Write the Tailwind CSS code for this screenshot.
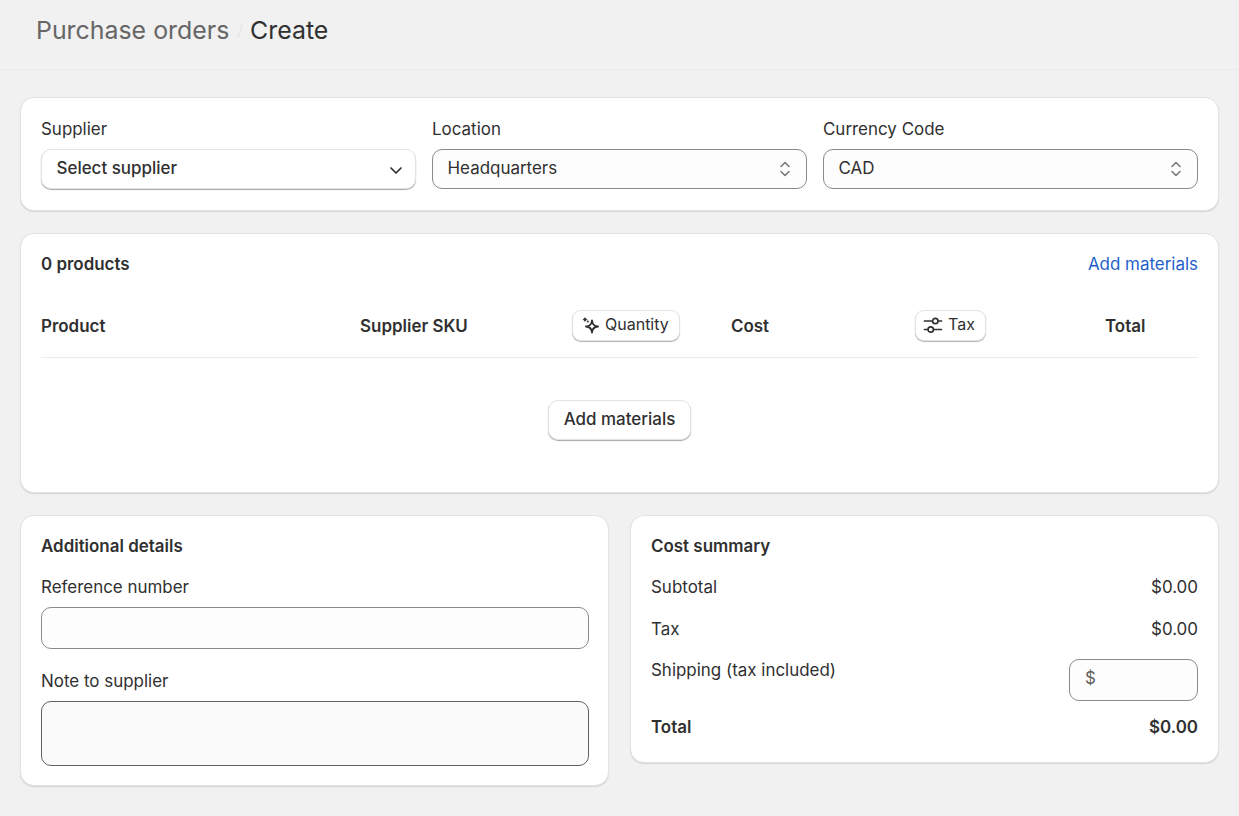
<!DOCTYPE html>
<html>
<head>
<meta charset="utf-8">
<script src="https://cdn.jsdelivr.net/npm/@tailwindcss/browser@4"></script>
</head>
<body class="bg-[#f1f1f1] font-[Inter,sans-serif] text-[#303030] text-[16.95px] leading-[24px] w-[1239px] h-[816px] overflow-hidden">
  <header class="h-[70px] border-b border-[#ebebeb] pl-[36px] pt-[12px] flex items-start text-[24.9px] leading-[36px]">
    <span class="text-[#666666]">Purchase orders</span>
    <span class="text-[#e6e6e6] ml-[8px] mr-[7px] text-[16px]">/</span>
    <span class="text-[#303030]">Create</span>
  </header>
  <main class="px-[20px] pt-[27px] flex flex-col gap-[22px]">
    <section class="bg-white rounded-[14px] border border-[#e3e3e3] shadow-[0_1px_1px_rgba(0,0,0,0.12)] h-[114px] px-[20px] pt-[19px] grid grid-cols-3 gap-x-[16px]">
      <div>
        <div class="h-[24px] mb-[8px] leading-[25px]">Supplier</div>
        <div class="h-[40px] rounded-[10px] bg-white border border-[#e3e3e3] shadow-[0_1px_1px_rgba(0,0,0,0.35)] pl-[14.5px] pr-[11px] flex items-center justify-between font-medium">
          <span class="-mt-[2px]">Select supplier</span>
          <svg class="w-[16px] h-[16px] mt-[2px]" viewBox="0 0 16 16" fill="none" stroke="#303030" stroke-width="1.7" stroke-linecap="round" stroke-linejoin="round"><path d="M3 6l5 5 5-5"/></svg>
        </div>
      </div>
      <div>
        <div class="h-[24px] mb-[8px] leading-[25px]">Location</div>
        <div class="h-[40px] rounded-[10px] bg-[#fdfdfd] border border-[#8a8a8a] pl-[14.5px] pr-[14.5px] flex items-center justify-between">
          <span class="-mt-[2px]">Headquarters</span>
          <svg class="w-[14px] h-[20px]" viewBox="0 0 14 20" fill="none" stroke="#7a7a7a" stroke-width="1.6" stroke-linecap="round" stroke-linejoin="round"><path d="M3 7.5l4-4 4 4M3 12.5l4 4 4-4"/></svg>
        </div>
      </div>
      <div>
        <div class="h-[24px] mb-[8px] leading-[25px]">Currency Code</div>
        <div class="h-[40px] rounded-[10px] bg-[#fdfdfd] border border-[#8a8a8a] pl-[14.5px] pr-[14.5px] flex items-center justify-between">
          <span class="-mt-[2px]">CAD</span>
          <svg class="w-[14px] h-[20px]" viewBox="0 0 14 20" fill="none" stroke="#7a7a7a" stroke-width="1.6" stroke-linecap="round" stroke-linejoin="round"><path d="M3 7.5l4-4 4 4M3 12.5l4 4 4-4"/></svg>
        </div>
      </div>
    </section>

    <section class="bg-white rounded-[14px] border border-[#e3e3e3] shadow-[0_1px_1px_rgba(0,0,0,0.12)] h-[260px] px-[20px] pt-[18px]">
      <div class="flex justify-between h-[24px]">
        <span class="font-semibold">0 products</span>
        <span class="text-[#1f5fc9]">Add materials</span>
      </div>
      <div class="flex items-center h-[65px] pt-[2px] mt-[17px] border-b border-[#ebebeb] font-semibold">
        <div class="w-[319px]">Product</div>
        <div class="w-[212px]">Supplier SKU</div>
        <div class="w-[159px]">
          <div class="w-[108px] h-[31px] -mt-[2px] rounded-[9px] bg-white border border-[#e3e3e3] shadow-[0_1px_1px_rgba(0,0,0,0.3)] flex items-center pl-[7px] gap-[5px] font-normal text-[16px]">
            <svg class="w-[20px] h-[20px] shrink-0" viewBox="0 0 20 20" fill="none" stroke="#303030" stroke-width="1.9" stroke-linejoin="round"><path d="M12 5.5Q12.4 11.1 18 11.5 12.4 11.9 12 17.5 11.6 11.9 6 11.5 11.6 11.1 12 5.5Z"/><path d="M5 2.8l1.7 1.7-1.7 1.7-1.7-1.7z" fill="#303030" stroke-width="1"/><circle cx="7.8" cy="6.6" r="1" fill="#303030" stroke="none"/></svg>
            <span class="-mt-[2px]">Quantity</span>
          </div>
        </div>
        <div class="w-[184px]">Cost</div>
        <div class="w-[190px]">
          <div class="w-[71px] h-[31px] -mt-[2px] rounded-[9px] bg-white border border-[#e3e3e3] shadow-[0_1px_1px_rgba(0,0,0,0.3)] flex items-center pl-[7px] gap-[5px] font-normal text-[16px]">
            <svg class="w-[20px] h-[20px] shrink-0" viewBox="0 0 20 20" fill="none" stroke="#303030" stroke-width="1.7" stroke-linecap="round"><path d="M1.5 6h7.5M15.5 6h3M1.5 14.5h3M11 14.5h7.5"/><circle cx="12.3" cy="6" r="2.7"/><circle cx="7.7" cy="14.5" r="2.7"/></svg>
            <span class="-mt-[2px]">Tax</span>
          </div>
        </div>
        <div>Total</div>
      </div>
      <div class="flex justify-center pt-[42px]">
        <div class="w-[143px] h-[40px] rounded-[10px] bg-white border border-[#e3e3e3] shadow-[0_1px_1px_rgba(0,0,0,0.35)] flex items-center justify-center font-medium">
          <span class="-mt-[2px]">Add materials</span>
        </div>
      </div>
    </section>

    <div class="grid grid-cols-[589px_589px] gap-x-[21px] items-start">
      <section class="bg-white rounded-[14px] border border-[#e3e3e3] shadow-[0_1px_1px_rgba(0,0,0,0.12)] h-[271px] pl-[20px] pr-[19px] pt-[18px]">
        <div class="font-semibold h-[24px]">Additional details</div>
        <div class="h-[24px] mt-[17px] mb-[8px]">Reference number</div>
        <div class="h-[42px] rounded-[10px] bg-[#fdfdfd] border border-[#8a8a8a]"></div>
        <div class="h-[24px] mt-[20px] mb-[8px]">Note to supplier</div>
        <div class="h-[65px] rounded-[10px] bg-[#fafafa] border border-[#616161]"></div>
      </section>
      <section class="bg-white rounded-[14px] border border-[#e3e3e3] shadow-[0_1px_1px_rgba(0,0,0,0.12)] h-[248px] px-[20px] pt-[18px]">
        <div class="font-semibold h-[24px]">Cost summary</div>
        <div class="flex justify-between h-[24px] mt-[17px]"><span>Subtotal</span><span>$0.00</span></div>
        <div class="flex justify-between h-[24px] mt-[18px]"><span>Tax</span><span>$0.00</span></div>
        <div class="flex justify-between mt-[18px] h-[42px]">
          <span class="-mt-[1px] h-[24px]">Shipping (tax included)</span>
          <div class="w-[129px] h-[42px] rounded-[10px] bg-[#fdfdfd] border border-[#8a8a8a] pl-[15px] flex items-center text-[#616161]"><span class="-mt-[4px]">$</span></div>
        </div>
        <div class="flex justify-between h-[24px] mt-[14px] font-semibold"><span>Total</span><span>$0.00</span></div>
      </section>
    </div>
  </main>
</body>
</html>
